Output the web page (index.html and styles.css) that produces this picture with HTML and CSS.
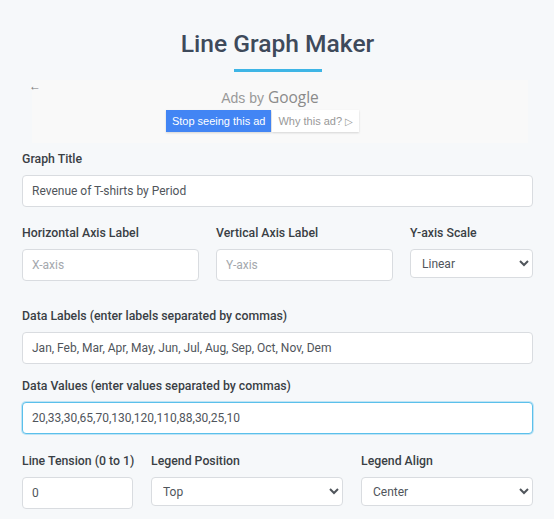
FILE: index.html
```html
<!DOCTYPE html>
<html lang="en">
<head>
  <meta charset="UTF-8">
  <title>Line Graph Maker</title>
  <link rel="stylesheet" href="styles.css">
</head>
<body>

<div class="page">

  <!--标题-->
  <h1 class="title">Line Graph Maker</h1>
  <div class="title-line"></div>

  <!--广告位-->
  <div class="ad">
    <span class="ad-back">&larr;</span>
    <p class="ad-by">Ads by <b>Google</b></p>
    <div class="ad-btns">
      <a class="ad-stop" href="javascript:;">Stop seeing this ad</a>
      <a class="ad-why" href="javascript:;">Why this ad? <span class="ad-play">&#9655;</span></a>
    </div>
  </div>

  <!--表单-->
  <div class="field field-first">
    <label>Graph Title</label>
    <input type="text" value="Revenue of T-shirts by Period">
  </div>

  <div class="row row-axis">
    <div class="field">
      <label>Horizontal Axis Label</label>
      <input type="text" placeholder="X-axis">
    </div>
    <div class="field">
      <label>Vertical Axis Label</label>
      <input type="text" placeholder="Y-axis">
    </div>
    <div class="field">
      <label>Y-axis Scale</label>
      <select>
        <option>Linear</option>
        <option>Logarithmic</option>
      </select>
    </div>
  </div>

  <div class="field field-labels">
    <label>Data Labels (enter labels separated by commas)</label>
    <input type="text" value="Jan, Feb, Mar, Apr, May, Jun, Jul, Aug, Sep, Oct, Nov, Dem">
  </div>

  <div class="field">
    <label>Data Values (enter values separated by commas)</label>
    <input class="focus" type="text" value="20,33,30,65,70,130,120,110,88,30,25,10">
  </div>

  <div class="row row-legend">
    <div class="field">
      <label>Line Tension (0 to 1)</label>
      <input type="text" value="0">
    </div>
    <div class="field">
      <label>Legend Position</label>
      <select>
        <option>Top</option>
        <option>Bottom</option>
      </select>
    </div>
    <div class="field">
      <label>Legend Align</label>
      <select>
        <option>Center</option>
        <option>Start</option>
      </select>
    </div>
  </div>

</div>

</body>
</html>
```

FILE: styles.css
```css
* {
  margin: 0;
  padding: 0;
  box-sizing: border-box;
}

body {
  background-color: #f6f8fa;
  font-family: Roboto, "Liberation Sans", Arial, sans-serif;
  color: #333;
}

.page {
  padding: 27px 21px 0 22px;
}

/*标题*/
.title {
  text-align: center;
  font-size: 24.6px;
  font-weight: 500;
  line-height: 34px;
  color: #3e4a5b;
}

.title-line {
  width: 88px;
  height: 3px;
  margin: 8px auto 0;
  background-color: #3db5e6;
}

/*广告*/
.ad {
  position: relative;
  margin: 8px 5px 0 10px;
  height: 63px;
  background-color: #f9f9f9;
  text-align: center;
  padding-top: 8px;
  padding-right: 20px;
}

.ad-back {
  position: absolute;
  left: -3px;
  top: -1px;
  font-size: 12px;
  color: #777;
}

.ad-by {
  font-family: "Liberation Sans", Arial, sans-serif;
  font-size: 14px;
  color: #999;
  line-height: 18px;
}

.ad-by b {
  font-family: "Open Sans", Roboto, sans-serif;
  font-weight: 500;
  font-size: 15.5px;
  color: #8a8a8a;
}

.ad-btns {
  display: flex;
  justify-content: center;
  margin-top: 3px;
  margin-right: 15px;
}

.ad-btns a {
  font-family: "Liberation Sans", Arial, sans-serif;
  font-size: 11px;
  line-height: 22px;
  height: 22px;
  padding: 0 6px;
  text-decoration: none;
  box-shadow: 0 1px 2px rgba(0, 0, 0, 0.15);
}

.ad-stop {
  background-color: #4285f4;
  color: #fff;
  margin-right: 1px;
}

.ad-why {
  background-color: #fff;
  color: #999;
}

.ad-play {
  font-size: 10px;
}

/*表单*/
.field {
  display: flex;
  flex-direction: column;
  margin-top: 14px;
}

.field-first {
  margin-top: 8px;
}

.field-labels {
  margin-top: 27px;
}

.field label {
  font-size: 12.3px;
  font-weight: 500;
  color: #3a3f45;
  line-height: 16px;
  margin-bottom: 8px;
  white-space: nowrap;
}

.field input,
.field select {
  height: 32px;
  border: 1px solid #d9dce0;
  border-radius: 4px;
  background-color: #fff;
  font-family: Roboto, "Liberation Sans", Arial, sans-serif;
  font-size: 12px;
  color: #50555b;
  padding: 0 9px;
  outline: none;
}

.field input::placeholder {
  color: #a4a8ad;
}

.field select {
  height: 29px;
  padding: 0 7px;
}

.field input.focus {
  border-color: #5bc0eb;
  box-shadow: 0 0 0 1px rgba(91, 192, 235, 0.35);
}

.row {
  display: grid;
  align-items: start;
}

.row .field {
  margin-top: 0;
}

.row-axis {
  grid-template-columns: 177px 177px 1fr;
  column-gap: 17px;
  margin-top: 18px;
}

.row-legend {
  grid-template-columns: 111px 192px 1fr;
  column-gap: 18px;
  margin-top: 19px;
}
```
